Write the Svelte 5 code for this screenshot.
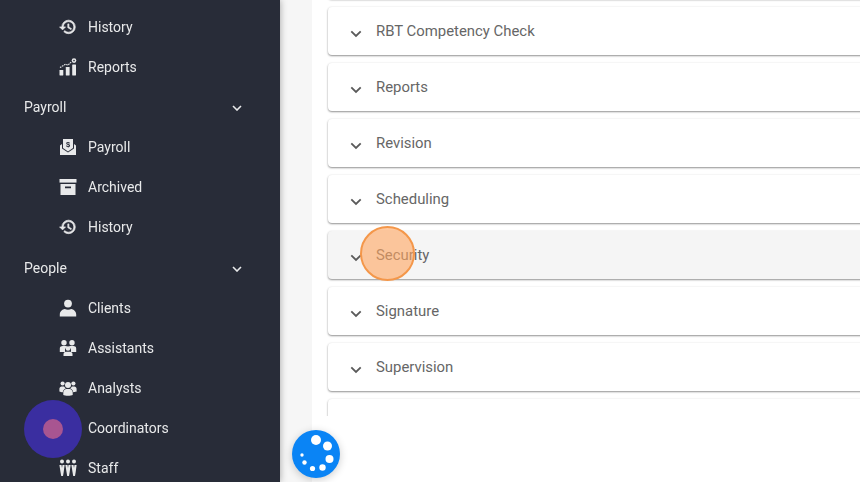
<script>
  const topItems = [
    { label: 'History', icon: 'history' },
    { label: 'Reports', icon: 'reports' }
  ];
  const groups = [
    {
      title: 'Payroll',
      items: [
        { label: 'Payroll', icon: 'payroll' },
        { label: 'Archived', icon: 'archive' },
        { label: 'History', icon: 'history' }
      ]
    },
    {
      title: 'People',
      items: [
        { label: 'Clients', icon: 'client' },
        { label: 'Assistants', icon: 'assistants' },
        { label: 'Analysts', icon: 'analysts' },
        { label: 'Coordinators', icon: 'analysts' },
        { label: 'Staff', icon: 'staff' }
      ]
    }
  ];
  const sections = ['RBT Competency Check', 'Reports', 'Revision', 'Scheduling', 'Security', 'Signature', 'Supervision'];
  const dots = [
    [24, 10, 5], [35.5, 16, 4.5], [37.5, 29, 4], [30.5, 37.5, 3.2],
    [20.5, 38.5, 2.6], [12.5, 32.5, 2.2], [10, 25, 1.7]
  ];
</script>

{#snippet icon(name)}
  <svg class="nav-icon" viewBox="0 0 18 18" fill="currentColor">
    {#if name === 'history'}
      <path transform="translate(-.2 -.1) scale(.75)" stroke="currentColor" stroke-width=".9" d="M13 3a9 9 0 0 0-9 9H1l3.89 3.89.07.14L9 12H6c0-3.87 3.13-7 7-7s7 3.13 7 7-3.13 7-7 7c-1.93 0-3.68-.79-4.94-2.06l-1.42 1.42A8.954 8.954 0 0 0 13 21a9 9 0 0 0 0-18zm-1 5v5l4.28 2.54.72-1.21-3.5-2.08V8H12z" />
    {:else if name === 'reports'}
      <rect x=".5" y="12" width="3.8" height="5.500" rx=".4" />
      <rect x="6.800" y="9" width="3.800" height="8.500" rx=".4" />
      <rect x="13.200" y="6.500" width="3.800" height="11" rx=".4" />
      <path d="M1 9.500 6.500 6.200 9 7.200 12.600 3.600" fill="none" stroke="currentColor" stroke-width="1.100" stroke-dasharray="1.600 .8" />
      <circle cx="15" cy="2.600" r="2.300" />
      <circle cx="15" cy="2.600" r=".8" fill="#282c38" />
    {:else if name === 'payroll'}
      <path d="M4 1h10v9l-5 3.400L4 10z" />
      <path d="M1 7.500 3 6v4.400l6 4 6-4V6l2 1.500V17H1z" />
      <text x="9" y="8.600" class="dollar" text-anchor="middle">$</text>
    {:else if name === 'archive'}
      <rect x=".5" y="1" width="17" height="3.600" />
      <path fill-rule="evenodd" d="M1.500 6h15v11h-15zM6 8.600v1.700h6V8.600z" />
    {:else if name === 'client'}
      <circle cx="9" cy="4.600" r="3.900" />
      <path d="M.8 17.400v-2c0-2.800 2.600-5 5-5.300 1.600 1 4.800 1 6.400 0 2.400.3 5 2.500 5 5.300v2z" />
    {:else if name === 'assistants'}
      <circle cx="5" cy="3.800" r="2.700" />
      <circle cx="13" cy="3.800" r="2.700" />
      <path d="M.8 13V9.400C.8 7.800 2.300 7 3.600 7h3c.8 0 1.300.3 1.700.8-1.500.6-2.300 2-2.300 3.700V13z" />
      <path d="M17.200 13V9.400c0-1.600-1.500-2.400-2.800-2.400h-3c-.8 0-1.300.3-1.700.8 1.500.6 2.300 2 2.300 3.700V13z" />
      <circle cx="9" cy="9.500" r="2.300" />
      <path d="M4.500 17v-2c0-1.300 1-2.300 2.300-2.300h4.400c1.300 0 2.300 1 2.300 2.300v2z" />
    {:else if name === 'analysts'}
      <circle cx="9" cy="6" r="3" />
      <circle cx="3.600" cy="4.500" r="2.100" />
      <circle cx="14.400" cy="4.500" r="2.100" />
      <path d="M4.300 16v-2.700c0-2 1.700-3.300 3-3.300h3.400c1.300 0 3 1.300 3 3.300V16c-1.500 1-8 1-9.400 0z" />
      <path d="M.4 12.500V9.800c0-1.300 1-2.300 2.200-2.300h2.500c.4.800 1 1.500 1.700 2-1.600.6-3 2-3 3.800C2.600 13.300 1.200 13 .4 12.500z" />
      <path d="M17.600 12.500V9.800c0-1.300-1-2.300-2.200-2.300h-2.500c-.4.800-1 1.500-1.700 2 1.600.6 3 2 3 3.800 1.200-.3 2.600-.6 3.400-1.100z" />
    {:else if name === 'staff'}
      <circle cx="3" cy="2.600" r="2" />
      <circle cx="9" cy="2.600" r="2" />
      <circle cx="15" cy="2.600" r="2" />
      <path d="M.4 6h2.100L3 9l.5-3h2.100l-.9 7-.7 4H2.200l-.7-4z" />
      <path d="M6.400 6h2.100L9 9l.5-3h2.100l-.9 7-.7 4H8.200l-.7-4z" />
      <path d="M12.400 6h2.100L15 9l.5-3h2.100l-.9 7-.7 4h-1.800l-.7-4z" />
    {/if}
  </svg>
{/snippet}

{#snippet navRow(item)}
  <div class="nav-row">
    {@render icon(item.icon)}
    <span>{item.label}</span>
  </div>
{/snippet}

<div class="screen">
  <aside class="sidebar">
    {#each topItems as item}
      {@render navRow(item)}
    {/each}
    {#each groups as group}
      <div class="nav-group" class:people={group.title === 'People'}>
        <span>{group.title}</span>
        <svg class="group-chevron" viewBox="0 0 10 6"><path d="M1 1l4 4 4-4" /></svg>
      </div>
      {#each group.items as item}
        {@render navRow(item)}
      {/each}
    {/each}
  </aside>

  <main class="main">
    <div class="panel">
      <div class="list">
        <div class="card"></div>
        {#each sections as title}
          <div class="card" class:hovered={title === 'Security'}>
            <svg class="card-chevron" viewBox="0 0 12 8"><path d="M1.300 1.300 6 6l4.700-4.700" /></svg>
            <span>{title}</span>
          </div>
        {/each}
        <div class="card"></div>
      </div>
    </div>
  </main>

  <div class="click-dot"></div>
  <div class="orange-dot"></div>
  <div class="help-button">
    <svg viewBox="0 0 48 48" width="48" height="48">
      {#each dots as [cx, cy, r]}
        <circle {cx} {cy} {r} fill="#fff" />
      {/each}
    </svg>
  </div>
</div>

<style>
  :global(body) {
    margin: 0;
  }

  .screen {
    position: relative;
    display: flex;
    width: 860px;
    height: 482px;
    overflow: hidden;
    font-family: Roboto, "Liberation Sans", sans-serif;
    font-size: 14px;
    filter: blur(0.3px);
  }

  .sidebar {
    position: relative;
    z-index: 1;
    flex: 0 0 280px;
    box-sizing: border-box;
    height: 482px;
    padding-top: 7px;
    overflow: hidden;
    background: #282c38;
    color: #e8e9ea;
    box-shadow: 0 0 7px rgba(0, 0, 0, 0.35);
  }

  .nav-row {
    display: flex;
    align-items: center;
    gap: 11px;
    height: 40px;
    padding-left: 59px;
  }

  .nav-icon {
    flex: none;
    width: 18px;
    height: 18px;
  }

  .dollar {
    font-family: "Liberation Sans", sans-serif;
    font-size: 7.5px;
    font-weight: 700;
    fill: #282c38;
  }

  .nav-group {
    display: flex;
    align-items: center;
    justify-content: space-between;
    height: 40px;
    padding: 0 38px 0 24px;
  }

  .nav-group.people {
    margin-top: 1px;
  }

  .group-chevron {
    width: 10px;
    height: 6px;
    margin-top: 2px;
    fill: none;
    stroke: #e8e9ea;
    stroke-width: 1.6;
  }

  .main {
    flex: 1;
    padding-left: 32px;
    background: #f6f6f6;
  }

  .panel {
    height: 100%;
    padding-left: 10px;
    background: #fff;
  }

  .list {
    display: flex;
    flex-direction: column;
    gap: 8px;
    height: 416px;
    margin-right: -20px;
    padding-left: 6px;
    overflow: hidden;
  }

  .card {
    display: flex;
    flex: none;
    align-items: center;
    gap: 14px;
    box-sizing: border-box;
    height: 48px;
    padding: 0 0 1px 22px;
    border-radius: 4px;
    background: #fff;
    color: #666;
    font-size: 14.9px;
    box-shadow: 0 1px 2px rgba(0, 0, 0, 0.42), 0 0 3px rgba(0, 0, 0, 0.05);
  }

  .card:first-child {
    margin-top: -49px;
  }

  .card.hovered {
    background: #f5f5f5;
  }

  .card-chevron {
    width: 12px;
    height: 8px;
    margin-top: 6px;
    fill: none;
    stroke: #5a5a5a;
    stroke-width: 1.8;
  }

  .click-dot {
    position: absolute;
    z-index: 2;
    left: 24px;
    top: 400px;
    display: flex;
    align-items: center;
    justify-content: center;
    width: 58px;
    height: 58px;
    border-radius: 50%;
    background: #3a2ea0;
  }

  .click-dot::after {
    content: "";
    width: 20px;
    height: 20px;
    border-radius: 50%;
    background: #a85591;
  }

  .orange-dot {
    position: absolute;
    z-index: 2;
    left: 360px;
    top: 226px;
    box-sizing: border-box;
    width: 55px;
    height: 55px;
    border: 2px solid #f4974a;
    border-radius: 50%;
    background: rgba(255, 165, 95, 0.6);
  }

  .help-button {
    position: absolute;
    z-index: 2;
    left: 292px;
    top: 430px;
    width: 48px;
    height: 48px;
    border-radius: 50%;
    background: #0a84f5;
    box-shadow: 0 2px 8px rgba(0, 0, 0, 0.2);
  }
</style>
